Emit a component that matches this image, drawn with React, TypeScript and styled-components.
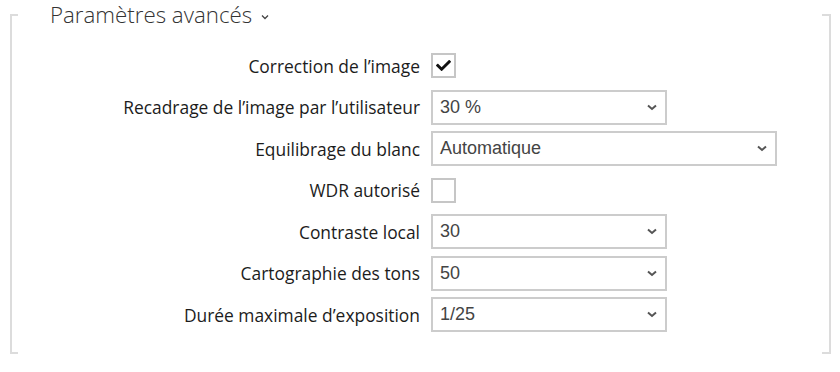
import React from "react";
import styled, { createGlobalStyle } from "styled-components";
import { FaCheck } from "react-icons/fa";

const Global = createGlobalStyle`
  html, body { margin: 0; padding: 0; background: #fff; }
  body { font-family: "Open Sans", "Noto Sans", sans-serif; }
`;

const Page = styled.div`
  width: 840px;
  height: 372px;
  padding: 14px 9px 0 10px;
  box-sizing: border-box;
`;

const Panel = styled.section`
  position: relative;
  display: flow-root;
  height: 340px;
  border-left: 2px solid #dcdcdc;
  border-right: 2px solid #dcdcdc;
  box-sizing: border-box;
  &::before, &::after {
    content: "";
    position: absolute;
    left: 0;
    right: 0;
    height: 2px;
    background:
      linear-gradient(#dcdcdc, #dcdcdc) left / 6px 2px no-repeat,
      linear-gradient(#dcdcdc, #dcdcdc) right / 7px 2px no-repeat;
  }
  &::before { top: 0; }
  &::after { bottom: 0; }
`;

const Title = styled.h2`
  margin: -14px 0 0 38px;
  height: 30px;
  display: flex;
  align-items: center;
  gap: 9px;
  font-family: "Open Sans", sans-serif;
  font-weight: 300;
  font-size: 22.3px;
  line-height: 30px;
  color: #333;
`;

const Form = styled.div`
  display: grid;
  grid-template-columns: 408px auto;
  column-gap: 11px;
  row-gap: 5.5px;
  margin-top: 17.5px;
  grid-auto-rows: 36px;
  align-items: center;
`;

const Label = styled.label`
  justify-self: end;
  font-size: 17.4px;
  color: #1c1c1c;
  white-space: nowrap;
`;

const Check = styled.div`
  width: 25px;
  height: 25px;
  box-sizing: border-box;
  border: 2px solid #c6c6c6;
  display: flex;
  align-items: center;
  justify-content: center;
  color: #111;
`;

const Select = styled.div<{ $w: number }>`
  width: ${(p) => p.$w}px;
  height: 35px;
  box-sizing: border-box;
  border: 2px solid #cccccc;
  display: flex;
  align-items: center;
  justify-content: space-between;
  padding: 0 8px 0 7px;
  font-family: "Liberation Sans", Arial, sans-serif;
  font-size: 18px;
  color: #444;
`;

const Chevron = () => (
  <svg width="10" height="7" viewBox="0 0 10 7">
    <path d="M1 1.5 L5 5 L9 1.5" fill="none" stroke="#555" strokeWidth="2" />
  </svg>
);

const TitleChevron = () => (
  <svg width="8" height="6" viewBox="0 0 8 6" style={{ marginTop: 4 }}>
    <path d="M1 1.5 L4 4.5 L7 1.5" fill="none" stroke="#444" strokeWidth="1.3" />
  </svg>
);

const rows: { label: string; kind: "check" | "select"; value?: string; checked?: boolean; w?: number }[] = [
  { label: "Correction de l’image", kind: "check", checked: true },
  { label: "Recadrage de l’image par l’utilisateur", kind: "select", value: "30 %", w: 236 },
  { label: "Equilibrage du blanc", kind: "select", value: "Automatique", w: 346 },
  { label: "WDR autorisé", kind: "check", checked: false },
  { label: "Contraste local", kind: "select", value: "30", w: 236 },
  { label: "Cartographie des tons", kind: "select", value: "50", w: 236 },
  { label: "Durée maximale d’exposition", kind: "select", value: "1/25", w: 236 },
];

export default function App() {
  return (
    <>
      <Global />
      <Page>
        <Panel>
          <Title>
            Paramètres avancés <TitleChevron />
          </Title>
          <Form>
            {rows.map((r) => (
              <React.Fragment key={r.label}>
                <Label>{r.label}</Label>
                {r.kind === "check" ? (
                  <Check>{r.checked && <FaCheck size={15} />}</Check>
                ) : (
                  <Select $w={r.w!}>
                    <span>{r.value}</span>
                    <Chevron />
                  </Select>
                )}
              </React.Fragment>
            ))}
          </Form>
        </Panel>
      </Page>
    </>
  );
}
